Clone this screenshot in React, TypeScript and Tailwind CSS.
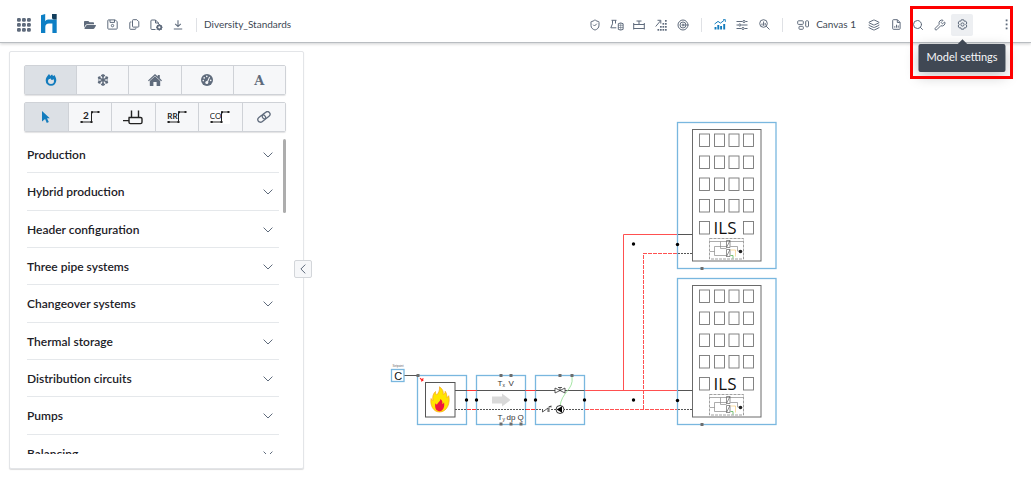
import React from "react";
import { FaFolderOpen, FaSnowflake } from "react-icons/fa";
import { Wrench, Search, Target, ShieldCheck, Layers } from "lucide-react";

type IconProps = { children: React.ReactNode; box?: string; className?: string; width?: number };

function Svg({ children, box = "0 0 14 14", className = "size-3.5", width = 1 }: IconProps) {
  return (
    <svg viewBox={box} className={className} fill="none" stroke="currentColor" strokeWidth={width} aria-hidden="true">
      {children}
    </svg>
  );
}

function ToolButton({ label, active, children }: { label: string; active?: boolean; children: React.ReactNode }) {
  return (
    <button
      type="button"
      aria-label={label}
      className={`flex size-[22px] shrink-0 items-center justify-center rounded-xs ${active ? "bg-[#edeff2]" : ""}`}
    >
      {children}
    </button>
  );
}

function Divider() {
  return <span className="mx-[7px] h-3.5 w-px shrink-0 bg-[#dfe1e5]" />;
}

const AppsIcon = () => (
  <Svg className="size-[14px]">
    <g fill="currentColor" stroke="none">
      {[0, 5, 10].map((y) => [0, 5, 10].map((x) => <rect key={`${x}-${y}`} x={x} y={y} width="3.8" height="3.8" rx="1.2" />))}
    </g>
  </Svg>
);

const Logo = () => (
  <svg viewBox="0 0 16 20" className="h-5 w-4" aria-label="h logo">
    <path d="M0 1.2L4.2 0v7.2C5.2 5.9 6.7 5.6 8.3 5.6h7.4V19h-4.3V9.6H8c-2.5 0-3.7 1.2-3.7 3.4v6H0z" fill="#0d7fc5" />
    <path d="M11 0h4.7v5.600H13c-1.400 0-2-.8-2-2z" fill="#123e5c" />
  </svg>
);

const SaveIcon = () => (
  <Svg className="size-[11px]" box="0 0 11 11">
    <path d="M1.500 .9h6.800l1.900 1.900v6.600q0 .7-.7.7H1.500q-.7 0-.7-.7V1.600q0-.7.7-.7zM3 1v2.400h4.500V1" />
    <circle cx="5.500" cy="6.600" r="1.200" />
  </Svg>
);

const CopyIcon = () => (
  <Svg className="size-[11px]" box="0 0 11 11">
    <path d="M4.200 .7h3.600l2 2v4.700q0 .7-.7.7H4.200q-.7 0-.7-.7V1.400q0-.7.7-.7zM2.400 3h-.9q-.7 0-.7.7v5.900q0 .7.7.7h4.600q.7 0 .7-.7V8.800" />
  </Svg>
);

const FileGearIcon = () => (
  <Svg className="h-3 w-[13px]" box="0 0 13 12">
    <path d="M5.500 10.500H2q-1.100 0-1.100-1V1.900Q.9 1 2 1h3.500l3 3v1.200M5.500 1v3h3" />
    <circle cx="9.300" cy="8.300" r="2" strokeWidth="1.700" />
    <path d="M9.300 5v1M9.300 10.600v1M6 8.300h1M11.600 8.300h1M7 6l.8.8M10.900 9.900l.8.8M11.600 6l-.8.8M7.700 9.900l-.8.800" />
  </Svg>
);

const DownloadIcon = () => (
  <Svg className="size-[10px]" box="0 0 10 10" width={1.1}>
    <path d="M5 .2v6.300M2.200 3.900L5 6.600l2.800-2.700M.8 9h8.400" />
  </Svg>
);

const PlantIcon = () => (
  <Svg className="h-3 w-[14px]" box="0 0 14 12">
    <path d="M1.500 1.300h5M2.500 1.300v3.500L.8 8.800h5.500M5.500 1.300v3.200" />
    <path d="M8.300 4.700q2.400-1.500 4.800 0v5.700q-2.400 1.300-4.800 0z" />
    <path d="M8.300 6.300h4.800M8.300 8.500h4.800M10.700 4v7" strokeWidth=".6" />
  </Svg>
);

const ValveIcon = () => (
  <Svg className="h-[10px] w-3" box="0 0 12 10">
    <path d="M3.500 1h5M6 1v3.500M.7 3v6.500M11.300 3v6.500M.7 4.500h10.600M.7 8.500h10.600" />
  </Svg>
);

const ScatterIcon = () => (
  <Svg className="size-3" box="0 0 12 12">
    <path d="M.7 7.500L5.500 1.800M2.500 1.300h3.300v3.300" />
    <g fill="currentColor" stroke="none">
      {[[10, 1], [7.500, 4], [10, 4], [5, 7], [7.500, 7], [10, 7], [2.500, 10], [5, 10], [7.500, 10], [10, 10]].map(([x, y]) => (
        <rect key={`${x}-${y}`} x={x} y={y} width="1.700" height="1.700" />
      ))}
    </g>
  </Svg>
);

const ChartIcon = () => (
  <Svg className="h-[11px] w-3" box="0 0 12 11">
    <path d="M.6 5L4 2.400l2.500 1.700L10.500 1" />
    <path d="M9 .6h2.400V3" strokeWidth=".8" />
    <path d="M1.500 10.500V8M4.300 10.500V6M7.100 10.500V7M10.200 10.500V5" strokeWidth="1.900" />
  </Svg>
);

const SlidersIcon = () => (
  <Svg className="h-[10px] w-3" box="0 0 12 10">
    <path d="M.5 1.500h6M9.500 1.500h2M.5 5h1.800M5.300 5h6.200M.5 8.500h5M8.500 8.500h3" />
    <circle cx="8" cy="1.500" r="1.100" />
    <circle cx="3.800" cy="5" r="1.100" />
    <circle cx="7" cy="8.500" r="1.100" />
  </Svg>
);

const ZoomChartIcon = () => (
  <Svg className="size-[11px]" box="0 0 11 11">
    <circle cx="4.500" cy="4.500" r="3.800" />
    <path d="M7.200 7.200l3.300 3.300M3 6.500V4.500M4.600 6.800V2.500M6.200 6.500V4" />
  </Svg>
);

const CanvasIcon = () => (
  <Svg className="h-[10px] w-[13px]" box="0 0 13 10">
    <rect x=".7" y=".8" width="5.600" height="3.600" rx=".8" />
    <rect x="2" y="6.300" width="4.300" height="3" rx=".8" />
    <rect x="8.700" y=".8" width="2.800" height="6" rx=".8" />
  </Svg>
);

const ReportIcon = () => (
  <Svg className="h-[11px] w-[9px]" box="0 0 9 11">
    <path d="M1.400.7h4l2.700 2.700v6.200q0 .7-.7.7h-6q-.7 0-.7-.7V1.400q0-.7.7-.7zM5.300.8v2.700h2.600M2.800 8.700V7.200M4.500 8.700V5.700M6.200 8.700V6.500" />
  </Svg>
);

const GearIcon = () => (
  <Svg className="size-[11px]" box="0 0 11 11">
    <path d="M4.300.8h2.400l.5 1.400 1.400-.2 1.300 2-1 1.500 1 1.500-1.300 2-1.400-.2-.5 1.400H4.300l-.5-1.400-1.400.2-1.300-2 1-1.500-1-1.500 1.300-2 1.400.2z" strokeLinejoin="round" />
    <circle cx="5.500" cy="5.500" r="1.600" />
  </Svg>
);

const MoreIcon = () => (
  <Svg className="size-[11px]" box="0 0 11 11">
    <g fill="currentColor" stroke="none">
      <rect x="4.700" y=".5" width="1.800" height="1.800" />
      <rect x="4.700" y="4.500" width="1.800" height="1.800" />
      <rect x="4.700" y="8.500" width="1.800" height="1.800" />
    </g>
  </Svg>
);

const FlameIcon = () => (
  <svg viewBox="0 0 12 12" className="size-3" aria-hidden="true">
    <path
      fill="currentColor"
      fillRule="evenodd"
      d="M4 0C4.600.6 5 1.200 5.200 2c.5-.8 1.300-1.300 2.100-1.500 0 .8.500 1.300 1.200 1.500L9.400 1c1 1.500 1.900 3.200 1.900 5.300A5.300 5.400 0 0 1 6 11.800 5.300 5.400 0 0 1 .7 6.400c0-2.500 1.200-4 3.300-6.400zM4 4.900C3.300 5.600 3 6.200 3 7a3 2.900 0 0 0 6 0c0-.8-.2-1.400-.7-2-.3.600-.7.900-1.300.9C6 5.800 5.700 5 5.500 4.200 5.200 4.900 4.800 5.300 4 4.900z"
    />
  </svg>
);

const HomeIcon = () => (
  <svg viewBox="0 0 14 12" className="h-3 w-3.5" fill="currentColor" aria-hidden="true">
    <path d="M7 0l2.800 2.500V1h2v3.300L14 6.400l-.8.9L7 1.800.8 7.300 0 6.400z" />
    <path d="M7 2.200l5.200 4.700V11.500q0 .5-.5.500H8.600V8H5.400v4H2.300q-.5 0-.5-.5V6.900z" />
  </svg>
);

const GaugeIcon = () => (
  <svg viewBox="0 0 12 12" className="size-3" aria-hidden="true">
    <circle cx="6" cy="6" r="6" fill="currentColor" />
    <path d="M6 9L8.600 2.900" stroke="#f6f7f9" strokeWidth="1.100" />
    <g fill="#f6f7f9">
      <circle cx="5.800" cy="8.500" r="1.500" />
      <circle cx="2.300" cy="6.600" r=".8" />
      <circle cx="3.200" cy="3.900" r=".8" />
      <circle cx="5.800" cy="2.400" r=".8" />
      <circle cx="9.700" cy="6.400" r=".8" />
    </g>
  </svg>
);

const CursorIcon = () => (
  <svg viewBox="0 0 8 12" className="h-3 w-2" aria-hidden="true">
    <path fill="currentColor" d="M0 0l7.800 7.200H5l1.800 3.800-2 .9L3.100 8 0 10.600z" />
  </svg>
);

function PipeIcon({ text, plain }: { text: string; plain?: boolean }) {
  return (
    <svg viewBox="0 0 20 14" className="h-3.5 w-5 text-[#222]" fill="none" stroke="currentColor" aria-hidden="true">
      <path d="M1 12h10.500V2H19" />
      <path d="M.5 12h2.200M10.500 12h2M11 2.200h2M17.500 2h2" strokeWidth="1.900" />
      <text x={text.length > 1 ? 5.500 : 6} y="9" textAnchor="middle" fill="currentColor" stroke="none" fontSize={text.length > 1 ? 8 : 10} fontWeight={plain ? 400 : 700} className="font-['Lato',sans-serif]">
        {text}
      </text>
    </svg>
  );
}

const HeaderPipeIcon = () => (
  <Svg box="0 0 20 15" className="h-[15px] w-5 text-[#222]" width={1.4}>
    <path d="M5.500 7.500h12q1.500 0 1.500 1.300v3.500q0 1.300-1.500 1.300h-10q-1.500 0-1.500-1.300v-4.800M8.500.5v7M15.500.5v7M0 10.600h6" />
  </Svg>
);

const LinkIcon = () => (
  <Svg box="0 0 14 12" className="h-3 w-3.5" width={1.3}>
    <g transform="rotate(-38 7 6)">
      <rect x="0" y="3.300" width="8.400" height="5.200" rx="2.600" />
      <rect x="5.600" y="3.300" width="8.400" height="5.200" rx="2.600" />
    </g>
  </Svg>
);

const categories = [
  { label: "Heating", icon: <FlameIcon /> },
  { label: "Cooling", icon: <FaSnowflake className="size-3" /> },
  { label: "Building", icon: <HomeIcon /> },
  { label: "Controls", icon: <GaugeIcon /> },
  { label: "Text", icon: <span className="pt-0.5 font-['DejaVu_Serif',serif] text-[13px] font-bold">A</span> },
];

const tools = [
  { label: "Select", icon: <CursorIcon /> },
  { label: "Two pipe", icon: <PipeIcon text="2" /> },
  { label: "Header", icon: <HeaderPipeIcon /> },
  { label: "Reverse return", icon: <PipeIcon text="RR" /> },
  { label: "Changeover", icon: <span className="bg-white"><PipeIcon text="CO" plain /></span> },
  { label: "Link", icon: <LinkIcon /> },
];

const sections = [
  "Production",
  "Hybrid production",
  "Header configuration",
  "Three pipe systems",
  "Changeover systems",
  "Thermal storage",
  "Distribution circuits",
  "Pumps",
  "Balancing",
];

function ButtonGroup({ items }: { items: { label: string; icon: React.ReactNode }[] }) {
  return (
    <div className="flex h-[30px] divide-x divide-[#cfd2d7] rounded-xs border border-[#cfd2d7] shadow-[0_1px_1px_rgba(17,20,24,0.12)]">
      {items.map((item, i) => (
        <button
          key={item.label}
          type="button"
          aria-label={item.label}
          aria-pressed={i === 0}
          className={`flex flex-1 items-center justify-center ${i === 0 ? "bg-[#dce0e5] text-[#137cbd]" : "bg-[#f6f7f9] text-[#5f6b7c]"}`}
        >
          {item.icon}
        </button>
      ))}
    </div>
  );
}

function Sidebar() {
  return (
    <aside className="relative w-[295px] shrink-0 self-start rounded-xs border border-[#e3e5e8] bg-white pt-[13px] pr-[17px] pb-3.5 pl-3.5 shadow-[0_1px_1px_rgba(17,20,24,0.15)]">
      <div className="flex flex-col gap-[7px]">
        <ButtonGroup items={categories} />
        <ButtonGroup items={tools} />
      </div>
      <div className="mt-1 flex h-[318px] justify-between overflow-hidden pl-[3px]">
        <ul className="grid h-[336px] w-[252px] auto-rows-fr">
          {sections.map((name) => (
            <li key={name} className="flex border-b border-[#e5e8eb]">
              <button type="button" className="flex flex-1 items-center justify-between pt-0.5 pr-1.5 text-left text-[12px] font-semibold text-[#1c2127]">
                {name}
                <Svg box="0 0 10 6" className="h-1.5 w-2.5 text-[#5f6b7c]">
                  <path d="M.6.6L5 5 9.400.6" />
                </Svg>
              </button>
            </li>
          ))}
        </ul>
        <div className="mt-[3px] h-[74px] w-[3px] rounded-full bg-[#adadad]" />
      </div>
      <button type="button" aria-label="Collapse panel" className="absolute top-52 -right-[9px] flex size-[18px] items-center justify-center rounded-xs border border-[#d3d6da] bg-[#f6f7f9] text-[#5f6b7c]">
        <Svg box="0 0 6 10" className="h-2.5 w-1.5">
          <path d="M5.300.6L.9 5l4.400 4.400" />
        </Svg>
      </button>
    </aside>
  );
}

function Handles({ points }: { points: number[][] }) {
  return (
    <g fill="#6e6e6e">
      {points.map(([x, y]) => (
        <rect key={`${x}-${y}`} x={x - 1.5} y={y - 1.5} width="3" height="3" />
      ))}
    </g>
  );
}

function Building() {
  const cols = [699.5, 714.5, 729, 743.5];
  const rows = [134, 156, 178, 199.5, 221.5];
  return (
    <g fill="none">
      <rect x="677.5" y="122.5" width="98.500" height="146" stroke="#79b7df" strokeWidth="1.300" />
      <rect x="692.5" y="129.500" width="68.500" height="131.500" stroke="#6a6a6a" />
      {rows.map((y, r) =>
        cols.map((x, c) => (r === 4 && (c === 1 || c === 2) ? null : <rect key={`${x}-${y}`} x={x} y={y} width="10" height="12.500" stroke="#777" strokeWidth=".9" />)),
      )}
      <text x="725" y="234" textAnchor="middle" fontSize="17" fontWeight="500" fill="#111" className="font-['Open_Sans',sans-serif]">ILS</text>
      <rect x="709.5" y="238.500" width="34" height="20.500" stroke="#888" strokeWidth=".8" strokeDasharray="3 1" />
      <path d="M710 241.500h33M720.500 241.500v7h6M714.500 246.500v9h12M714.500 246.500h12M710 251.500h4.500M730.500 246.500h7v4.500h3" stroke="#8a8a8a" strokeWidth=".7" />
      <path d="M726.500 240.500h3.500v7h-3.500zM726.500 249.500h3.500v7h-3.500zM726.500 247.500l3.500-7M726.500 256.500l3.500-7" stroke="#666" strokeWidth=".7" />
      <path d="M730.500 250h5v6.500" stroke="#f6c667" strokeWidth=".6" />
      <path d="M730.500 255.500h2.500v3" stroke="#58b558" strokeWidth=".8" />
      <circle cx="740.500" cy="251.500" r="1.800" fill="#222" />
      <path d="M678 234.500h14.500" stroke="#555" />
      <path d="M678 253.500h14.500" stroke="#555" strokeDasharray="2 1" />
      <circle cx="677.500" cy="244.500" r="1.700" fill="#000" />
      <Handles points={[[702, 268.5]]} />
    </g>
  );
}

function Diagram() {
  return (
    <svg viewBox="304 51 727 400" className="h-[400px] w-[727px] shrink-0" fill="none" role="img" aria-label="Hydronic circuit">
      <path d="M585 390.500H678M623.500 390.500V234.500H678" stroke="#ff5050" />
      <path d="M585 409.500H678" stroke="#ff5050" strokeDasharray="4 1" />
      <path d="M643.500 409V254" stroke="#ff5050" strokeDasharray="4 1" />
      <path d="M643 253.500H678" stroke="#ff5050" strokeDasharray="4 1" />
      <Building />
      <g transform="translate(0 156)">
        <Building />
      </g>

      <g stroke="#79b7df" strokeWidth="1.300">
        <rect x="391.500" y="369.500" width="12.500" height="12" />
        <rect x="417.500" y="375.500" width="49" height="49" />
        <rect x="476.500" y="375.500" width="49" height="49" />
        <rect x="535.500" y="375.500" width="49" height="49" />
      </g>
      <g className="font-['Liberation_Sans',sans-serif]">
        <text x="392.500" y="367" fontSize="3" fill="#666">Setpoint</text>
        <text x="398.200" y="379.800" fontSize="11" fill="#111" textAnchor="middle">C</text>
      </g>
      <path d="M404.500 375.500H417.500" stroke="#555" />
      <path d="M420 378.300l3.300 2.600M423.300 378.300l-2 3" stroke="#f22" strokeWidth="1.200" />

      <g stroke="#555">
        <path d="M455 390.500h12M476.500 390.500h49M535.500 390.500h49" />
        <path d="M455 409.500h12M477 409.500h49M536 409.500h7M551 409.500h33" strokeDasharray="2 1" />
        <rect x="425.500" y="382.500" width="29.500" height="34.500" fill="#fff" />
      </g>
      <g stroke="#f33" strokeWidth="1.200">
        <path d="M467 390.500h9.500M525.500 390.500h10" />
        <path d="M467 409.500h9.500M526 409.500h10" strokeDasharray="4 1" />
      </g>
      <path d="M439.500 386.800c2.800 2 4.300 4.500 3.700 7.700 1.400-.5 2-1.600 2-3.200 2 2.600 1.500 5 1.500 6.200 1-.3 1.700-1 2-1.800 1.800 7-1.400 16.300-9.200 16.300-6.500 0-9.700-7.400-8.400-13.500.6 1 1 1.800 1.900 2.200-.8-4 .1-7 2.500-9.200 0 1.700.3 2.700 1.200 3.500 2-2.200 3.200-4.800 2.800-8.200z" fill="#ffe500" stroke="#f8a21b" strokeWidth=".7" />
      <path d="M440.500 399c2 1.800 2.200 3.400 1.800 5 1-.3 1.500-1 1.700-1.800 1 4.400-1 9-4.400 9s-5.300-3.600-4.200-8c.6.800 1 1.200 1.600 1.300.6-2 3.200-3 3.500-5.500z" fill="#f0173f" />

      <path d="M492 396.500h10v-3l8.500 6.500-8.500 6.500v-3h-10z" fill="#d9d9d9" />
      <g fontSize="8" fill="#333" className="font-['Liberation_Sans',sans-serif]">
        <text x="497.500" y="385.500">T<tspan fontSize="5" dy="1.500">x</tspan></text>
        <text x="508.500" y="385.500">V</text>
        <text x="497.500" y="419.500">T<tspan fontSize="5" dy="1.500">y</tspan></text>
        <text x="506.500" y="419.500">dp</text>
        <text x="517.500" y="419.500">Q</text>
      </g>

      <path d="M572 377c2 13-11 15-12 30" stroke="#8fe08f" strokeWidth=".8" />
      <path d="M555 388l10 5v-5l-10 5zM558 387.500h4M560 387.500v3" stroke="#333" fill="#fff" strokeWidth=".8" />
      <path d="M542.500 409.500v2.500l5.500-4v4M549 412v-5.500h2M551 405.500v2" stroke="#333" strokeWidth=".8" />
      <circle cx="560" cy="409.500" r="4" fill="#fff" stroke="#222" strokeWidth=".9" />
      <path d="M556.500 409.500l5.500-3.300v6.600z" fill="#000" />

      <g fill="#000">
        {[[466.5, 400], [476.5, 400], [525.5, 400], [535.5, 400], [584.5, 400], [633.5, 244], [633.5, 400]].map(([x, y]) => (
          <circle key={`${x}-${y}`} cx={x} cy={y} r="1.700" />
        ))}
      </g>
      <Handles points={[[418, 375.5], [501, 375.5], [511, 375.5], [501, 424], [511, 424], [521, 424], [560, 375.5], [572, 375.5]]} />
    </svg>
  );
}

function Header() {
  return (
    <header className="relative z-10 flex h-[43px] items-center border-b border-[#b9bdc1] pt-[7px] pr-3.5 pl-[13px] text-[#5f6b7c] shadow-[0_1px_3px_rgba(17,20,24,0.2)]">
      <ToolButton label="Apps">
        <AppsIcon />
      </ToolButton>
      <a href="#home" className="ml-1.5 pb-px" aria-label="Home">
        <Logo />
      </a>
      <div className="ml-[22px] flex items-center">
        <ToolButton label="Open"><FaFolderOpen className="size-3" /></ToolButton>
        <ToolButton label="Save"><SaveIcon /></ToolButton>
        <ToolButton label="Copy"><CopyIcon /></ToolButton>
        <ToolButton label="File settings"><FileGearIcon /></ToolButton>
        <ToolButton label="Download"><DownloadIcon /></ToolButton>
      </div>
      <Divider />
      <h1 className="text-[10px] text-[#404854]">Diversity_Standards</h1>

      <div className="ml-auto flex items-center">
        <ToolButton label="Validate"><ShieldCheck className="size-3" /></ToolButton>
        <ToolButton label="Plant"><PlantIcon /></ToolButton>
        <ToolButton label="Valves"><ValveIcon /></ToolButton>
        <ToolButton label="Sizing"><ScatterIcon /></ToolButton>
        <ToolButton label="Target"><Target className="size-3" /></ToolButton>
        <Divider />
        <ToolButton label="Results"><span className="text-[#137cbd]"><ChartIcon /></span></ToolButton>
        <ToolButton label="Adjust"><SlidersIcon /></ToolButton>
        <ToolButton label="Analyse"><ZoomChartIcon /></ToolButton>
        <Divider />
        <button type="button" className="flex items-center gap-1.5 px-[7px] text-[10px] text-[#404854]">
          <span className="text-[#5f6b7c]"><CanvasIcon /></span>
          Canvas 1
        </button>
        <ToolButton label="Layers"><Layers className="size-3" /></ToolButton>
        <ToolButton label="Report"><ReportIcon /></ToolButton>
        <ToolButton label="Search"><Search className="size-3" /></ToolButton>
        <ToolButton label="Tools"><Wrench className="size-3" /></ToolButton>
        <div className="relative">
          <ToolButton label="Model settings" active><GearIcon /></ToolButton>
          <div role="tooltip" className="absolute top-[30px] left-1/2 flex h-7 -translate-x-1/2 items-center rounded-xs bg-[#404854] px-2 text-[11px] whitespace-nowrap text-[#f6f7f9] shadow-[0_4px_14px_rgba(17,20,24,0.25)]">
            <span className="absolute -top-[3px] left-1/2 size-2 -translate-x-1/2 rotate-45 bg-[#404854]" />
            Model settings
          </div>
        </div>
        <span className="w-[22px]" />
        <ToolButton label="More"><MoreIcon /></ToolButton>
      </div>
      <div className="pointer-events-none absolute top-1.5 right-[18px] h-[73px] w-[103px] border-3 border-[#fe0000]" />
    </header>
  );
}

export default function App() {
  return (
    <div className="min-h-screen overflow-hidden bg-white font-['Lato','Noto_Sans',sans-serif]">
      <Header />
      <main className="flex pt-2 pl-[9px]">
        <Sidebar />
        <Diagram />
      </main>
    </div>
  );
}
